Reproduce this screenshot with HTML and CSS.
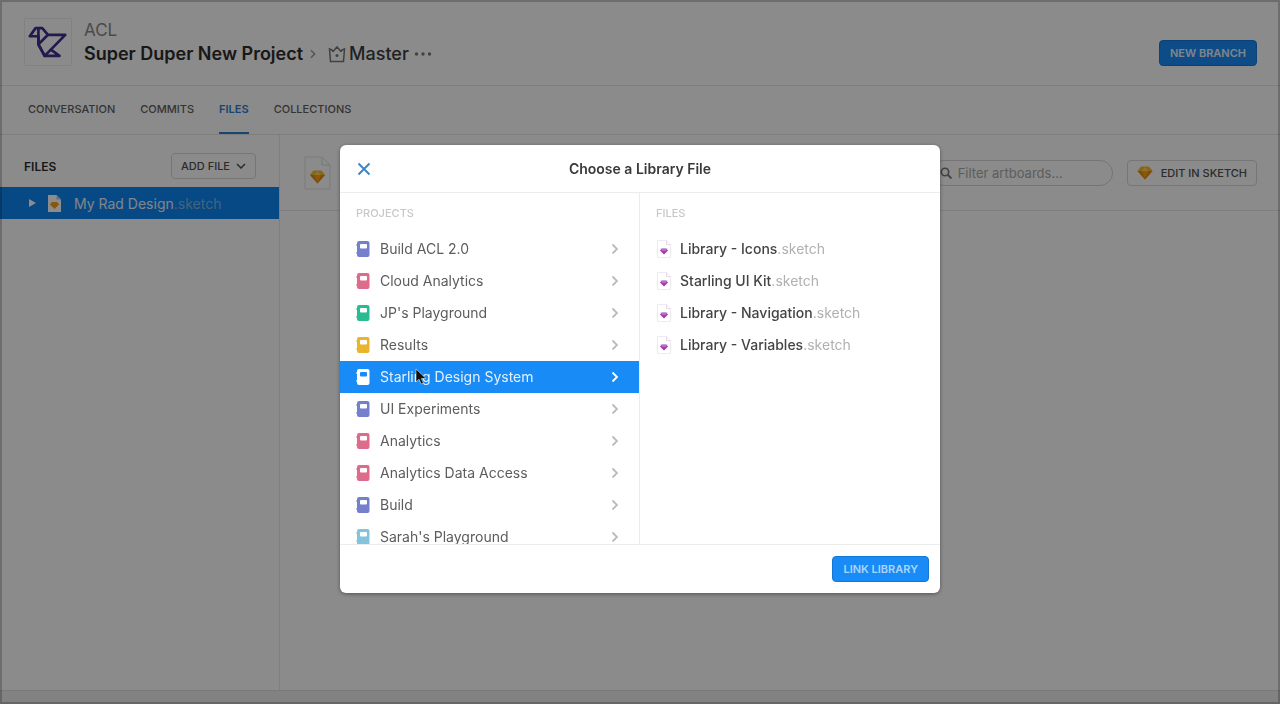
FILE: index.html
```html
<!DOCTYPE html>
<html lang="en">
<head>
<meta charset="utf-8">
<meta name="viewport" content="width=device-width, initial-scale=1">
<title>Super Duper New Project</title>
<link rel="stylesheet" href="styles.css">
</head>
<body>
<svg class="defs" aria-hidden="true">
  <symbol id="book" viewBox="0 0 14 16"><path fill="currentColor" d="M3 0h8.500Q13.500 0 13.500 2v12q0 2-2 2H3Q1 16 1 14v-1H.5v-2H1V5H.5V3H1V2Q1 0 3 0z"/><rect class="book-label" x="4" y="3" width="7" height="4.500" rx="1"/></symbol>
  <symbol id="chevron" viewBox="0 0 8 12"><path d="M1.500 1.500 6 6l-4.500 4.500" fill="none" stroke="currentColor" stroke-width="1.800"/></symbol>
  <symbol id="gem" viewBox="0 0 16 14"><path fill="#f7b82c" d="M4 .5h8L15.500 5 8 13.500.5 5z"/><path fill="#e88a08" d="M.5 5h15L8 13.500z"/><path fill="#ffd35c" d="M4.500 5 8 1l3.500 4z"/><path fill="#f7a21c" d="M4.500 5h7L8 12z"/></symbol>
  <symbol id="library" viewBox="0 0 16 20"><path d="M1.500 1.500h9l4 4v13h-13z" fill="#fff" stroke="#f0e8f2"/><path d="M10.500 1.500v4h4" fill="none" stroke="#e2dce5"/><path d="M5.500 9.500h5l1.500 2-4 4-4-4z" fill="#a836b0"/><path d="M5 10.500h6l-1 1H6z" fill="#d59ad8"/></symbol>
</svg>

<div class="window">
  <header class="header">
    <svg class="logo" viewBox="0 0 48 48" role="img" aria-label="ACL logo"><g fill="none" stroke="#3f2f90" stroke-width="2.800" stroke-linejoin="round"><path d="M5 18 11 9.500h7l6 7h18L27 32l9 6.500H20.500L14 26.500V18z"/><path d="M14 9.500V26.500L24 16.500M14 26.500 20.500 38.500 27 32"/></g></svg>
    <div class="titles">
      <a class="org" href="#">ACL</a>
      <nav class="crumbs" aria-label="Breadcrumb">
        <a class="project" href="#">Super Duper New Project</a>
        <svg class="crumb-arrow" aria-hidden="true"><use href="#chevron"/></svg>
        <a class="branch" href="#"><svg class="crown" viewBox="0 0 18 18" aria-hidden="true"><path d="M4 5 1.500 4l1 12.500h13l1-12.500L14 5M5 6.500 9 2l4 4.500M5 6.500 3.500 4.500M13 6.500l1.500-2" fill="none" stroke="currentColor" stroke-width="1.500"/><circle cx="9" cy="10.500" r="1.500" fill="currentColor"/></svg>Master</a>
        <button class="more" type="button" aria-label="More"><svg viewBox="0 0 18 4" aria-hidden="true"><circle cx="2.500" cy="2" r="1.700"/><circle cx="9" cy="2" r="1.700"/><circle cx="15.500" cy="2" r="1.700"/></svg></button>
      </nav>
    </div>
    <button class="button primary" type="button">NEW BRANCH</button>
  </header>

  <nav class="tabs" aria-label="Project">
    <a href="#">CONVERSATION</a>
    <a href="#">COMMITS</a>
    <a class="active" href="#" aria-current="page">FILES</a>
    <a href="#">COLLECTIONS</a>
  </nav>

  <div class="workspace">
    <aside class="sidebar">
      <div class="sidebar-head">
        <h2>FILES</h2>
        <button class="button plain" type="button">ADD FILE<svg class="caret" viewBox="0 0 10 6" aria-hidden="true"><path d="m1 1 4 4 4-4" fill="none" stroke="currentColor" stroke-width="1.500"/></svg></button>
      </div>
      <a class="file-row" href="#">
        <svg class="triangle" viewBox="0 0 7 8" aria-hidden="true"><path d="m0 0 7 4-7 4z" fill="#fff"/></svg>
        <svg class="file-icon" viewBox="0 0 14 17" aria-hidden="true"><path d="M1 0h8.500L14 4.500V17H1z" fill="#fff"/><path d="M9.500 0v4.500H14z" fill="#b9c9dc"/><path d="M5 7h5l2 2.500L7.500 14 3 9.500z" fill="#f0a020"/></svg>
        <span class="file-name">My Rad Design<span class="ext">.sketch</span></span>
      </a>
    </aside>
    <main class="content">
      <div class="toolbar">
        <svg class="doc" viewBox="0 0 28 34" aria-hidden="true"><path d="M1 1h17l8 8v24H1z" fill="none" stroke="#e0e0e0"/><path d="M18 1v8h8z" fill="#fff" stroke="#d5d9de"/><use href="#gem" x="5" y="14" width="17" height="14"/></svg>
        <label class="search"><svg viewBox="0 0 12 12" aria-hidden="true"><circle cx="5" cy="5" r="3.700" fill="none" stroke="currentColor" stroke-width="1.600"/><path d="m8 8 3.500 3.500" stroke="currentColor" stroke-width="1.800"/></svg><input type="search" placeholder="Filter artboards..." aria-label="Filter artboards"></label>
        <button class="button plain" type="button"><svg class="gem" aria-hidden="true"><use href="#gem"/></svg>EDIT IN SKETCH</button>
      </div>
    </main>
  </div>
  <div class="status"></div>
</div>

<div class="overlay">
  <section class="modal" role="dialog" aria-modal="true" aria-labelledby="modal-title">
    <header class="modal-head">
      <button class="close" type="button" aria-label="Close"><svg viewBox="0 0 14 14" aria-hidden="true"><path d="m1.500 1.500 11 11m0-11-11 11" stroke="currentColor" stroke-width="2"/></svg></button>
      <h1 id="modal-title">Choose a Library File</h1>
    </header>
    <div class="modal-body">
      <div class="column projects">
        <h3>PROJECTS</h3>
        <button class="row" type="button"><svg class="book indigo"><use href="#book"/></svg><span>Build ACL 2.0</span><svg class="arrow"><use href="#chevron"/></svg></button>
        <button class="row" type="button"><svg class="book pink"><use href="#book"/></svg><span>Cloud Analytics</span><svg class="arrow"><use href="#chevron"/></svg></button>
        <button class="row" type="button"><svg class="book green"><use href="#book"/></svg><span>JP's Playground</span><svg class="arrow"><use href="#chevron"/></svg></button>
        <button class="row" type="button"><svg class="book yellow"><use href="#book"/></svg><span>Results</span><svg class="arrow"><use href="#chevron"/></svg></button>
        <button class="row selected" type="button" aria-pressed="true"><svg class="book"><use href="#book"/></svg><span>Starling Design System</span><svg class="arrow"><use href="#chevron"/></svg><svg class="pointer" viewBox="0 0 12 18" aria-hidden="true"><path d="M1 1v13l3-2.800L6.200 16l2.200-1L6.300 10.500H11z" fill="#111" stroke="#fff" stroke-width=".5"/></svg></button>
        <button class="row" type="button"><svg class="book indigo"><use href="#book"/></svg><span>UI Experiments</span><svg class="arrow"><use href="#chevron"/></svg></button>
        <button class="row" type="button"><svg class="book pink"><use href="#book"/></svg><span>Analytics</span><svg class="arrow"><use href="#chevron"/></svg></button>
        <button class="row" type="button"><svg class="book pink"><use href="#book"/></svg><span>Analytics Data Access</span><svg class="arrow"><use href="#chevron"/></svg></button>
        <button class="row" type="button"><svg class="book indigo"><use href="#book"/></svg><span>Build</span><svg class="arrow"><use href="#chevron"/></svg></button>
        <button class="row" type="button"><svg class="book sky"><use href="#book"/></svg><span>Sarah's Playground</span><svg class="arrow"><use href="#chevron"/></svg></button>
      </div>
      <div class="column files">
        <h3>FILES</h3>
        <button class="row" type="button"><svg class="library"><use href="#library"/></svg><span>Library - Icons<span class="ext">.sketch</span></span></button>
        <button class="row" type="button"><svg class="library"><use href="#library"/></svg><span>Starling UI Kit<span class="ext">.sketch</span></span></button>
        <button class="row" type="button"><svg class="library"><use href="#library"/></svg><span>Library - Navigation<span class="ext">.sketch</span></span></button>
        <button class="row" type="button"><svg class="library"><use href="#library"/></svg><span>Library - Variables<span class="ext">.sketch</span></span></button>
      </div>
    </div>
    <footer class="modal-foot">
      <button class="button primary faded" type="button">LINK LIBRARY</button>
    </footer>
  </section>
</div>
</body>
</html>
```
FILE: styles.css
```css
* { box-sizing: border-box; }
body {
  margin: 0;
  font-family: Inter, "Liberation Sans", sans-serif;
  font-size: 14px;
  color: #2b2b2b;
}
a { color: inherit; text-decoration: none; }
button, input { font: inherit; color: inherit; }
button { cursor: pointer; }
h1, h2, h3 { margin: 0; }
svg { display: block; flex: none; }
.defs { position: absolute; width: 0; height: 0; }

.window {
  display: flex;
  flex-direction: column;
  min-height: 100vh;
  background: #fdfdfd;
}
.header {
  display: flex;
  align-items: flex-end;
  padding: 18px 23px 19px 24px;
  border-bottom: 1px solid #e6e6e6;
}
.logo { width: 48px; height: 48px; border: 1px solid #ececec; border-radius: 2px; }
.titles { flex: 1; margin-left: 12px; line-height: 24px; }
.org { display: block; font-size: 17px; color: #888; }
.crumbs { display: flex; align-items: center; height: 24px; font-size: 18px; }
.project { font-weight: 600; color: #2c2c2c; }
.crumb-arrow { width: 8px; height: 10px; margin: 0 11px 0 6px; color: #999; }
.branch { display: flex; align-items: center; gap: 3px; font-weight: 500; color: #3c3c3c; }
.crown { width: 18px; height: 18px; color: #777; }
.more { display: flex; padding: 0; margin-left: 5px; border: 0; background: none; }
.more svg { width: 18px; height: 4px; fill: #777; }

.button {
  display: flex;
  align-items: center;
  height: 26px;
  padding: 0 9px;
  border: 1px solid #d8d8d8;
  border-radius: 4px;
  font-size: 11px;
  font-weight: 500;
  white-space: nowrap;
}
.primary {
  padding: 0 10px;
  background: #188bf6;
  border-color: #1577d4;
  color: #e8f2fc;
  font-weight: 600;
}
.faded { color: #a9d5fc; }
.plain { background: #fefefe; color: #505050; }

.tabs {
  display: flex;
  gap: 25px;
  padding: 0 28px;
  border-bottom: 1px solid #e6e6e6;
  font-size: 11px;
  font-weight: 500;
  line-height: 46px;
  color: #606060;
}
.tabs a { padding-top: 1px; border-bottom: 2px solid transparent; line-height: 45px; }
.tabs .active { color: #2f7fcd; border-color: #2f7fcd; font-weight: 600; }

.workspace { flex: 1; display: flex; }
.sidebar { width: 280px; border-right: 1px solid #e8e8e8; }
.sidebar-head {
  display: flex;
  align-items: center;
  justify-content: space-between;
  height: 52px;
  padding: 10px 23px 0 24px;
}
.sidebar-head h2 { font-size: 12px; font-weight: 600; }
.caret { width: 10px; height: 6px; margin-left: 6px; }
.file-row {
  display: flex;
  align-items: center;
  height: 32px;
  padding-left: 29px;
  background: #0d85f2;
  color: #e8f2fc;
}
.triangle { width: 7px; height: 8px; }
.file-icon { width: 14px; height: 17px; margin: 0 13px 0 11px; }
.file-row .ext { color: #7fb4e6; }

.content { flex: 1; }
.toolbar {
  display: flex;
  align-items: center;
  height: 76px;
  padding: 0 23px 0 24px;
  border-bottom: 1px solid #e6e6e6;
}
.doc { width: 28px; height: 34px; margin-right: auto; }
.search {
  display: flex;
  align-items: center;
  gap: 6px;
  height: 26px;
  width: 182px;
  padding: 0 8px;
  margin-right: 14px;
  border: 1px solid #d4d4d4;
  border-radius: 13px;
  color: #777;
}
.search svg { width: 12px; height: 12px; }
.search input {
  flex: 1;
  min-width: 0;
  padding: 0;
  border: 0;
  outline: 0;
  background: none;
  font-size: 13px;
}
.search input::placeholder { color: #aaa; }
.gem { width: 16px; height: 14px; margin-right: 8px; }
.status { height: 14px; background: #ededed; border-top: 1px solid #dedede; }

.overlay {
  position: fixed;
  inset: 0;
  display: flex;
  align-items: flex-start;
  justify-content: center;
  padding-top: 145px;
  background: rgba(0, 0, 0, .45);
  box-shadow: inset 0 0 0 2px rgba(0, 0, 0, .22);
}
.modal {
  width: 600px;
  max-width: 100%;
  border-radius: 6px;
  background: #fff;
  box-shadow: 0 1px 4px rgba(0, 0, 0, .4);
}
.modal-head {
  display: grid;
  grid-template-columns: 14px 1fr 14px;
  align-items: center;
  height: 48px;
  padding: 0 17px;
  border-bottom: 1px solid #ececec;
}
.modal-head h1 { font-size: 14px; font-weight: 600; text-align: center; color: #3a3a3a; }
.close { padding: 0; border: 0; background: none; color: #3d85c8; }
.close svg { width: 14px; height: 14px; }
.modal-body {
  display: grid;
  grid-template-columns: 1fr 1fr;
  height: 352px;
  border-bottom: 1px solid #ececec;
}
.column { min-width: 0; overflow: hidden; }
.projects { border-right: 1px solid #ececec; }
.column h3 {
  padding: 0 16px;
  font-size: 11px;
  font-weight: 500;
  line-height: 40px;
  color: #c8c8c8;
}
.row {
  --label: #fff;
  position: relative;
  display: flex;
  align-items: center;
  width: 100%;
  height: 32px;
  padding: 0 20px 0 16px;
  border: 0;
  background: none;
  color: #5c5c5c;
  text-align: left;
}
.row > span { padding-bottom: 2px; }
.row .arrow { width: 8px; height: 12px; margin-left: auto; color: #bbb; }
.book { width: 14px; height: 16px; margin-right: 10px; }
.book-label { fill: var(--label); }
.indigo { color: #7580cc; }
.pink { color: #de6b8c; }
.green { color: #2abb92; }
.yellow { color: #eab52c; }
.sky { color: #83c4dc; }
.row.selected { --label: #188bf6; background: #188bf6; color: #fff; }
.selected > span { color: #e4f1fe; }
.row.selected .arrow { color: #fff; }
.pointer { position: absolute; left: 75px; top: 7px; width: 12px; height: 18px; }
.library { width: 16px; height: 20px; margin-right: 8px; }
.files .row { color: #444; font-weight: 500; }
.files .ext { color: #b0b0b0; font-weight: 400; }
.modal-foot {
  display: flex;
  align-items: center;
  justify-content: flex-end;
  height: 48px;
  padding: 0 11px;
}
```
